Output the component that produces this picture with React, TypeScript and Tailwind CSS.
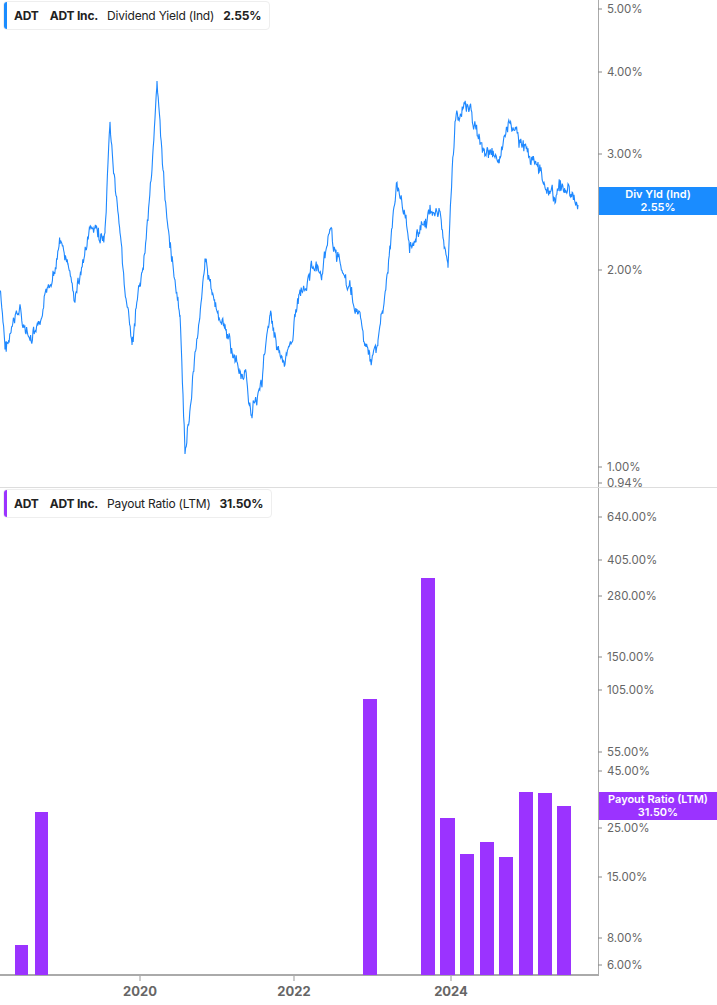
const keys: [number, number][] = [
  [0, 290], [5, 350], [20, 310], [30, 345], [40, 330], [50, 285], [60, 240], [68, 270], [75, 300], [90, 230], [105, 240],
  [110, 135], [120, 240], [132, 350], [145, 250], [152, 160], [157, 90], [165, 200], [175, 280], [180, 320], [185, 455],
  [192, 390], [205, 255], [215, 310], [225, 330], [235, 360], [245, 380], [252, 410], [262, 380], [270, 310],
  [285, 370], [300, 290], [315, 260], [322, 285], [330, 235], [345, 280], [360, 320], [370, 365], [378, 340],
  [388, 270], [397, 185], [410, 240], [430, 215], [440, 210], [448, 265], [455, 120], [470, 105], [480, 145],
  [495, 165], [510, 130], [525, 150], [535, 160], [545, 180], [555, 195], [565, 185], [578, 205],
];

function buildPath() {
  let seed = 7;
  const rnd = () => {
    seed = (seed * 9301 + 49297) % 233280;
    return seed / 233280 - 0.5;
  };
  const pts: string[] = [];
  let drift = 0;
  for (let i = 0; i < keys.length - 1; i++) {
    const [x0, y0] = keys[i];
    const [x1, y1] = keys[i + 1];
    for (let x = x0; x < x1; x += 0.6) {
      const t = (x - x0) / (x1 - x0);
      drift = drift * 0.85 + rnd() * 9;
      pts.push(`${x.toFixed(1)},${(y0 + (y1 - y0) * t + drift + rnd() * 8).toFixed(1)}`);
    }
  }
  pts.push("578,205");
  return "M" + pts.join(" L");
}

const topTicks: [string, number][] = [
  ["5.00%", 9], ["4.00%", 72], ["3.00%", 154], ["2.00%", 270], ["1.00%", 467], ["0.94%", 483],
];
const botTicks: [string, number][] = [
  ["640.00%", 29], ["405.00%", 72], ["280.00%", 108], ["150.00%", 169], ["105.00%", 202], ["55.00%", 264],
  ["45.00%", 283], ["25.00%", 340], ["15.00%", 389], ["8.00%", 450], ["6.00%", 477],
];
const bars: [number, number, number][] = [
  [15, 13, 457], [35, 13, 324], [363, 14, 211], [421, 14, 90], [440, 15, 330], [460, 14, 366],
  [480, 14, 354], [499, 14, 369], [519, 14, 304], [538, 14, 305], [557, 14, 318],
];

function Legend({ color, label, value }: { color: string; label: string; value: string }) {
  return (
    <div className="absolute left-[3px] top-[1px] flex h-[29px] items-center gap-[7px] rounded border border-[#eeeeee] bg-white pr-2 text-[12px] tracking-[-0.2px] text-[#222]">
      <div className={`h-full w-[3px] rounded-l ${color}`} />
      <span className="font-bold">ADT</span>
      <span className="ml-1 font-bold">ADT Inc.</span>
      <span className="ml-[2px]">{label}</span>
      <span className="ml-[2px] font-bold">{value}</span>
    </div>
  );
}

function Axis({ ticks }: { ticks: [string, number][] }) {
  return (
    <>
      {ticks.map(([t, y]) => (
        <g key={t}>
          <line x1={598} x2={602} y1={y} y2={y} stroke="#888" />
          <text x={607} y={y + 4} fontSize={11.5} fill="#666">{t}</text>
        </g>
      ))}
    </>
  );
}

export default function App() {
  return (
    <div className="flex h-[1005px] w-[717px] flex-col bg-white" style={{ fontFamily: "Inter, 'Liberation Sans', sans-serif" }}>
      <div className="relative h-[488px] border-b border-[#dddddd]">
        <svg width={717} height={487} className="block">
          <line x1={598.5} x2={598.5} y1={0} y2={487} stroke="#aaa" />
          <Axis ticks={topTicks} />
          <path d={buildPath()} fill="none" stroke="#1e88ff" strokeWidth={1.1} />
          <rect x={599} y={187} width={118} height={28} fill="#1a8cff" />
          <text x={658} y={198} fontSize={11} fontWeight={600} fill="#fff" textAnchor="middle">Div Yld (Ind)</text>
          <text x={658} y={211} fontSize={11} fontWeight={600} fill="#fff" textAnchor="middle">2.55%</text>
        </svg>
        <Legend color="bg-[#1a8cff]" label="Dividend Yield (Ind)" value="2.55%" />
      </div>
      <div className="relative h-[488px]">
        <svg width={717} height={488} className="block">
          <line x1={598.5} x2={598.5} y1={0} y2={488} stroke="#aaa" />
          <line x1={0} x2={599} y1={487} y2={487} stroke="#aaa" strokeWidth={2} />
          <Axis ticks={botTicks} />
          {bars.map(([x, w, y]) => (
            <rect key={x} x={x} y={y} width={w} height={487 - y} fill="#9b33ff" />
          ))}
          <rect x={599} y={304} width={118} height={28} fill="#9b33ff" />
          <text x={658} y={315} fontSize={11} fontWeight={600} fill="#fff" textAnchor="middle">Payout Ratio (LTM)</text>
          <text x={658} y={328} fontSize={11} fontWeight={600} fill="#fff" textAnchor="middle">31.50%</text>
        </svg>
        <Legend color="bg-[#9b33ff]" label="Payout Ratio (LTM)" value="31.50%" />
      </div>
      <div className="relative h-[29px]">
        <svg width={717} height={29} className="block">
          {[[140, "2020"], [294, "2022"], [451, "2024"]].map(([x, t]) => (
            <g key={t}>
              <line x1={x as number} x2={x as number} y1={0} y2={5} stroke="#999" />
              <text x={x as number} y={20} fontSize={13} fontWeight={700} fill="#666" textAnchor="middle">{t}</text>
            </g>
          ))}
        </svg>
      </div>
    </div>
  );
}
